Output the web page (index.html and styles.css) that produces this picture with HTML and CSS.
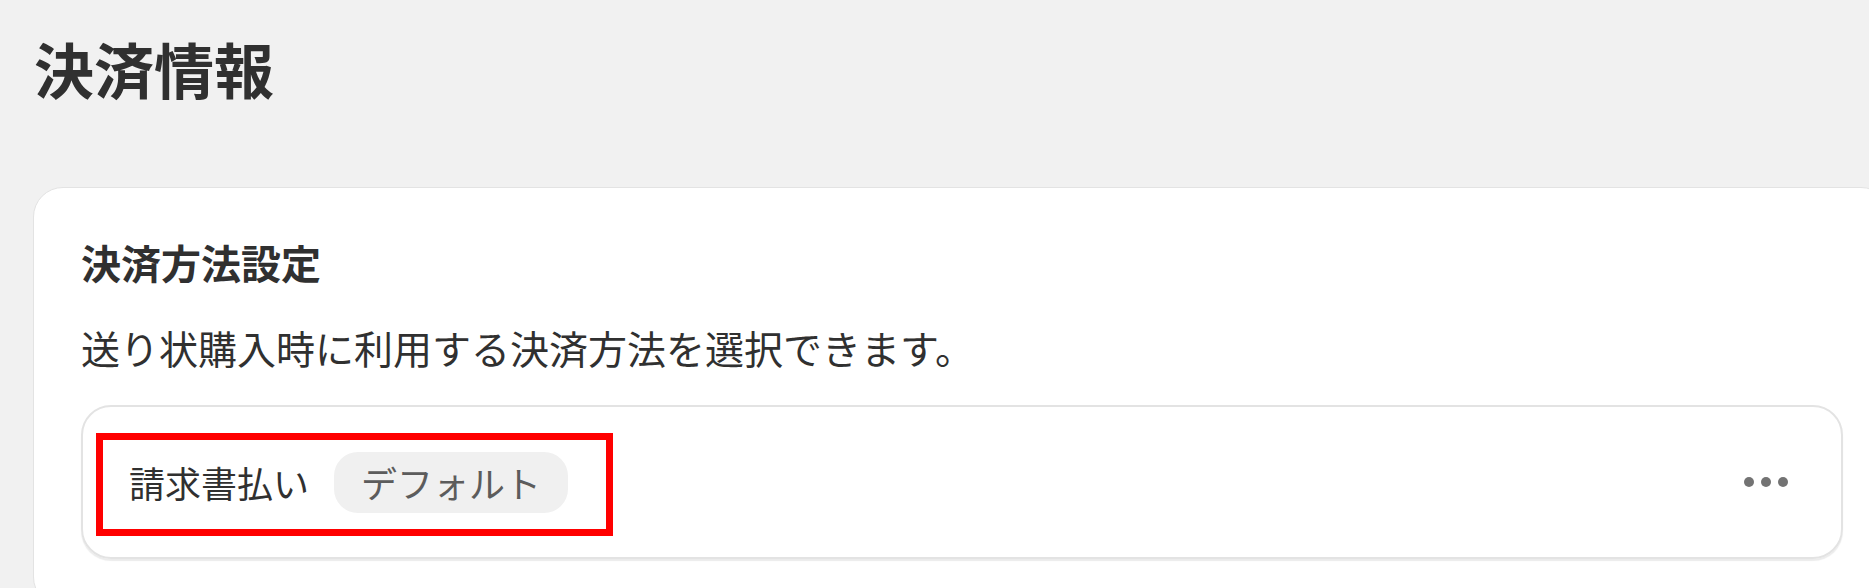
FILE: index.html
```html
<html>
<head>
  <link rel="stylesheet" href="styles.css">
</head>
<body>
  <div class="page">
    <h1 class="page-title">決済情報</h1>
    <div class="card">
      <h2 class="card-title">決済方法設定</h2>
      <p class="card-text">送り状購入時に利用する決済方法を選択できます。</p>
      <div class="method">
        <div class="method-info">
          <span class="method-name">請求書払い</span>
          <span class="badge">デフォルト</span>
        </div>
        <div class="more">
          <span class="dot"></span>
          <span class="dot"></span>
          <span class="dot"></span>
        </div>
        <div class="highlight"></div>
      </div>
    </div>
  </div>
</body>
</html>
```

FILE: styles.css
```css
body {
  margin: 0;
  padding: 0;
  background: #f1f1f1;
  font-family: "Noto Sans CJK JP", "Noto Sans", sans-serif;
  color: #303030;
  overflow: hidden;
}

.page {
  padding-left: 33px;
}

.page-title {
  margin: 32px 0 0 1px;
  font-size: 60px;
  line-height: 72px;
  font-weight: bold;
}

.card {
  width: 1858px;
  margin-top: 83px;
  padding: 50px 47px 0 47px;
  box-sizing: border-box;
  height: 420px;
  background: #fff;
  border: 1px solid #e3e3e3;
  border-radius: 30px;
}

.card-title {
  margin: 0;
  font-size: 40px;
  line-height: 48px;
  font-weight: bold;
}

.card-text {
  margin: 37px 0 0 0;
  font-size: 39px;
  line-height: 48px;
}

.method {
  position: relative;
  display: flex;
  align-items: center;
  justify-content: space-between;
  height: 154px;
  margin-top: 34px;
  padding: 0 53px 0 46px;
  box-sizing: border-box;
  border: 2px solid #e3e3e3;
  border-radius: 30px;
  box-shadow: 0 2px 1px rgba(0, 0, 0, 0.08);
}

.method-info {
  display: flex;
  align-items: center;
  gap: 25px;
}

.method-name {
  font-size: 36px;
  line-height: 48px;
}

.badge {
  display: flex;
  align-items: center;
  height: 61px;
  padding: 0 27px;
  background: #f0f0f0;
  border-radius: 24px;
  font-size: 36px;
  color: #5c5c5c;
}

.more {
  display: flex;
  gap: 7px;
}

.dot {
  width: 10px;
  height: 10px;
  border-radius: 50%;
  background: #737373;
}

.highlight {
  position: absolute;
  left: 13px;
  top: 26px;
  width: 517px;
  height: 103px;
  border: 7px solid #ff0000;
  box-sizing: border-box;
}
```
